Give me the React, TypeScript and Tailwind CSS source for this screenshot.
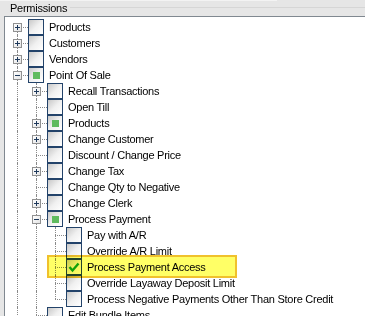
import React from 'react';

type Item = {
  level: number;
  label: string;
  expander?: '+' | '-';
  state?: 'partial' | 'checked';
};

const items: Item[] = [
  { level: 0, label: 'Products', expander: '+' },
  { level: 0, label: 'Customers', expander: '+' },
  { level: 0, label: 'Vendors', expander: '+' },
  { level: 0, label: 'Point Of Sale', expander: '-', state: 'partial' },
  { level: 1, label: 'Recall Transactions', expander: '+' },
  { level: 1, label: 'Open Till' },
  { level: 1, label: 'Products', expander: '+', state: 'partial' },
  { level: 1, label: 'Change Customer', expander: '+' },
  { level: 1, label: 'Discount / Change Price' },
  { level: 1, label: 'Change Tax', expander: '+' },
  { level: 1, label: 'Change Qty to Negative' },
  { level: 1, label: 'Change Clerk', expander: '+' },
  { level: 1, label: 'Process Payment', expander: '-', state: 'partial' },
  { level: 2, label: 'Pay with A/R' },
  { level: 2, label: 'Override A/R Limit' },
  { level: 2, label: 'Process Payment Access', state: 'checked' },
  { level: 2, label: 'Override Layaway Deposit Limit' },
  { level: 2, label: 'Process Negative Payments Other Than Store Credit' },
  { level: 1, label: 'Edit Bundle Items' },
  { level: 1, label: 'Void Items' },
  { level: 0, label: 'Inventory', expander: '+' },
  { level: 0, label: 'Reports', expander: '+' },
];

// does the node at i have a later sibling at the same level?
function hasNext(i: number) {
  const lvl = items[i].level;
  for (let j = i + 1; j < items.length; j++) {
    if (items[j].level < lvl) return false;
    if (items[j].level === lvl) return true;
  }
  return false;
}

// for row i, does the ancestor at level k carry on below?
function ancestorContinues(i: number, k: number) {
  for (let j = i + 1; j < items.length; j++) {
    if (items[j].level < k) return false;
    if (items[j].level === k) return true;
  }
  return false;
}

const dotV = 'absolute left-[12px] border-l border-dotted border-[#8a8a8a]';

function Expander({ kind }: { kind: '+' | '-' }) {
  return (
    <div className="absolute left-[8px] top-[4px] w-[9px] h-[9px] border border-[#919191] bg-linear-to-br from-white to-[#e4e4e4] flex items-center justify-center">
      <div className="relative w-[5px] h-[5px]">
        <div className="absolute left-0 top-[2px] w-[5px] h-[1px] bg-[#1e395b]" />
        {kind === '+' && <div className="absolute left-[2px] top-0 w-[1px] h-[5px] bg-[#1e395b]" />}
      </div>
    </div>
  );
}

function CheckBox({ state }: { state?: 'partial' | 'checked' }) {
  return (
    <div className="w-[16px] h-[16px] shrink-0 border border-[#23436a] bg-linear-to-br from-[#c8c8c8] via-[#f0f0f0] to-white flex items-center justify-center">
      {state === 'partial' && <div className="w-[7px] h-[7px] bg-[#5fbb5f]" />}
      {state === 'checked' && (
        <svg width="12" height="12" viewBox="0 0 12 12">
          <path d="M1.5 6 L4.5 9.5 L10.5 2.5" fill="none" stroke="#13a013" strokeWidth="2.4" />
        </svg>
      )}
    </div>
  );
}

function Row({ item, index }: { item: Item; index: number }) {
  const cols = [];
  for (let k = 0; k < item.level; k++) {
    cols.push(
      <div key={k} className="relative w-[19px] h-full shrink-0">
        {ancestorContinues(index, k) && <div className={dotV + ' top-0 bottom-0'} />}
      </div>
    );
  }
  const next = hasNext(index);
  let vClass = dotV + ' top-0 h-[8px]';
  if (index === 0) vClass = dotV + ' top-[8px] bottom-0';
  else if (next) vClass = dotV + ' top-0 bottom-0';

  return (
    <div className="flex h-4 items-center">
      {cols}
      <div className="relative w-[23px] h-full shrink-0">
        <div className={vClass} />
        <div className="absolute left-[12px] right-0 top-[8px] border-t border-dotted border-[#8a8a8a]" />
        {item.expander && <Expander kind={item.expander} />}
      </div>
      <CheckBox state={item.state} />
      <span className="ml-[5px] whitespace-nowrap leading-4 text-black tracking-[-0.25px]">{item.label}</span>
    </div>
  );
}

export default function App() {
  return (
    <div className="relative w-[365px] h-[316px] overflow-hidden bg-[#e6e6e6] text-[11px] font-['Liberation_Sans',Arial,sans-serif]">
      <div className="h-[1px] w-[277px] bg-[#f3f3f3]" />
      <div className="flex h-[15px] items-center">
        <span className="ml-[10px] leading-[15px] text-black tracking-[-0.25px]">Permissions</span>
        <div className="ml-[3px] flex-1 mt-[-2px] border-t border-[#d6d6d6]" />
      </div>
      <div className="ml-[4px] h-[300px] border-l border-t border-[#808890] bg-white pt-[2px] overflow-hidden">
        {items.map((it, i) => (
          <Row key={i} item={it} index={i} />
        ))}
      </div>
      <div className="absolute left-[47px] top-[255px] w-[190px] h-[23px] border-2 border-[#f0c12c] bg-[#ffff66] mix-blend-multiply" />
    </div>
  );
}
